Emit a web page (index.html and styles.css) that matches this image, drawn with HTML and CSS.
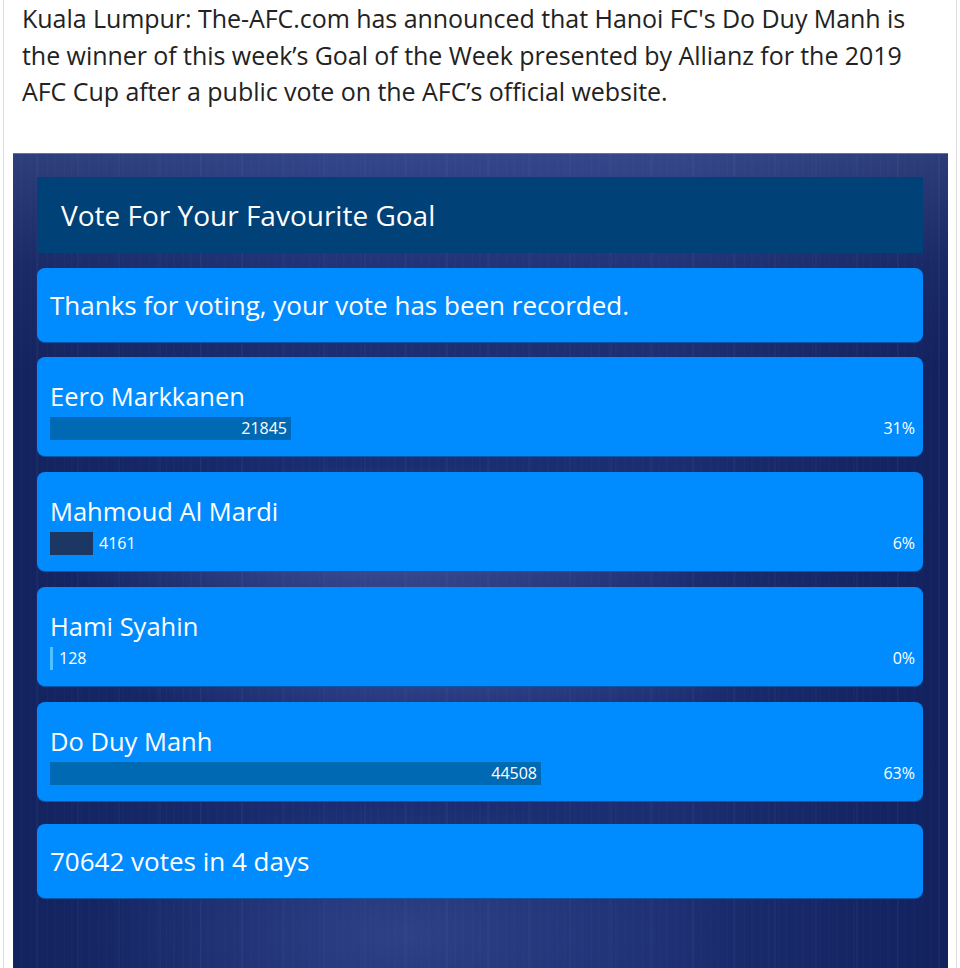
FILE: index.html
```html
<!DOCTYPE html>
<html lang="en">
<head>
  <meta charset="UTF-8">
  <meta name="viewport" content="width=device-width, initial-scale=1.0">
  <title>Goal of the Week</title>
  <link rel="stylesheet" href="styles.css">
</head>
<body>
  <div class="article">
    <p class="intro">Kuala Lumpur: The-AFC.com has announced that Hanoi FC's Do Duy Manh is the winner of this week’s Goal of the Week presented by Allianz for the 2019 AFC Cup after a public vote on the AFC’s official website.</p>

    <div class="poll">
      <h2 class="poll-title">Vote For Your Favourite Goal</h2>

      <div class="box message">Thanks for voting, your vote has been recorded.</div>

      <div class="box option">
        <div class="name">Eero Markkanen</div>
        <div class="result">
          <div class="bar mid" style="width: 241px">21845</div>
          <span class="pct">31%</span>
        </div>
      </div>

      <div class="box option">
        <div class="name">Mahmoud Al Mardi</div>
        <div class="result">
          <div class="bar low" style="width: 43px"></div>
          <span class="count">4161</span>
          <span class="pct">6%</span>
        </div>
      </div>

      <div class="box option">
        <div class="name">Hami Syahin</div>
        <div class="result">
          <div class="bar tiny" style="width: 3px"></div>
          <span class="count">128</span>
          <span class="pct">0%</span>
        </div>
      </div>

      <div class="box option">
        <div class="name">Do Duy Manh</div>
        <div class="result">
          <div class="bar mid" style="width: 491px">44508</div>
          <span class="pct">63%</span>
        </div>
      </div>

      <div class="box total">70642 votes in 4 days</div>
    </div>
  </div>
</body>
</html>
```

FILE: styles.css
```css
body {
  margin: 0;
  padding: 0;
  background: #fff;
  font-family: "Open Sans", "Noto Sans", sans-serif;
  color: #222;
}
.article {
  margin: 0 3px;
  border-left: 1px solid #dcdcdc;
  border-right: 1px solid #dcdcdc;
  padding: 0 8px 0 9px;
  min-height: 968px;
}
.intro {
  margin: 0 0 43px;
  padding: 0 9px;
  font-size: 25px;
  line-height: 36.5px;
  letter-spacing: -0.05px;
}
.poll {
  border-top: 1px solid #4f7bb0;
  padding: 23px 25px 80px 24px;
  background:
    radial-gradient(ellipse 36% 10% at 40% 47%, rgba(110, 130, 200, 0.45), transparent),
    radial-gradient(ellipse 36% 9% at 45% 60%, rgba(100, 120, 195, 0.4), transparent),
    radial-gradient(ellipse 34% 16% at 42% 93%, rgba(90, 110, 180, 0.3), transparent),
    linear-gradient(180deg, rgba(150, 170, 230, 0.2) 0, rgba(140, 160, 225, 0.06) 110px, transparent 220px),
    repeating-linear-gradient(90deg, rgba(255, 255, 255, 0.018) 0 1px, transparent 1px 7px, rgba(255, 255, 255, 0.012) 7px 9px, transparent 9px 17px),
    repeating-linear-gradient(90deg, transparent 0 23px, rgba(200, 210, 255, 0.03) 23px 25px, transparent 25px 41px),
    linear-gradient(90deg, #13235f 0, #1b2d72 35%, #1c2e71 70%, #12215e 100%);
}
.poll-title {
  margin: 0 0 15px;
  background: #004178;
  color: #fff;
  font-weight: normal;
  font-size: 28px;
  line-height: 76px;
  padding: 0 24px;
}
.box {
  background: #008cff;
  color: #fff;
  border-radius: 8px;
  box-shadow: 0 1px 0 #0a55a6;
  padding: 0 12px 0 13px;
  margin-bottom: 15px;
}
.message,
.total {
  font-size: 26px;
  line-height: 74px;
}
.option {
  padding-top: 21px;
  padding-bottom: 16px;
  margin-bottom: 16px;
}
.total {
  margin-top: 23px;
}
.name {
  font-size: 25.5px;
  line-height: 36px;
}
.result {
  display: flex;
  align-items: center;
  height: 23px;
  margin-top: 3px;
  font-size: 16px;
}
.bar {
  height: 23px;
  line-height: 23px;
  text-align: right;
  padding-right: 4px;
  box-sizing: border-box;
}
.bar.mid {
  background: #0069b4;
}
.bar.low {
  background: #1c3764;
}
.bar.tiny {
  background: #4fc3ff;
  padding: 0;
}
.count {
  margin-left: 6px;
}
.pct {
  margin-left: auto;
  margin-right: -4px;
}
```
